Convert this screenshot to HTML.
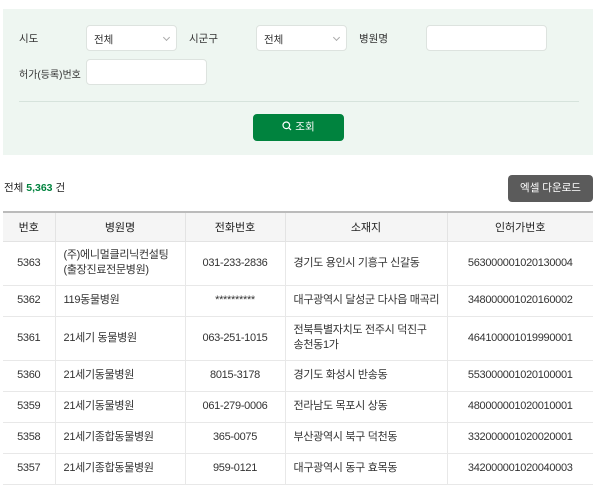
<!DOCTYPE html><html><head><style>
*{margin:0;padding:0;box-sizing:border-box}
body{width:600px;height:482px;overflow:hidden;background:#fff;font-family:"Liberation Sans","Noto Sans CJK KR",sans-serif;font-size:10px;color:#222;position:relative}
.box{position:absolute;left:3px;top:9px;width:590px;height:146px;background:#eef6f1}
.a{position:absolute}
.lbl{font-size:10.5px;color:#333}
.in{position:absolute;background:#fff;border:1px solid #dde3df;border-radius:4px;height:26px;font-size:10.5px;padding:6px 7px;color:#333}
.chev{position:absolute;right:7px;top:9px;width:5px;height:5px;border-right:1px solid #aaa;border-bottom:1px solid #aaa;transform:rotate(45deg)}
table{position:absolute;left:3px;top:211px;width:590px;border-collapse:collapse;table-layout:fixed;border-top:2px solid #bbb}
th{background:#f5f5f5;font-weight:normal;height:29px;font-size:11px;border-right:1px solid #e3e3e3;border-bottom:1px solid #e3e3e3}
td{border-right:1px solid #e8e8e8;border-bottom:1px solid #e8e8e8;font-size:11px;line-height:15px;padding:0 8px;height:31px;color:#333;white-space:nowrap;letter-spacing:-0.3px}
th:last-child,td:last-child{border-right:none}
td.c{text-align:center;padding:0 2px}
</style></head><body>
<div class="box"></div>
<div class="a lbl" style="left:19px;top:31px">시도</div>
<div class="in" style="left:86px;top:25px;width:91px">전체<span class="chev"></span></div>
<div class="a lbl" style="left:189px;top:31px">시군구</div>
<div class="in" style="left:256px;top:25px;width:91px">전체<span class="chev"></span></div>
<div class="a lbl" style="left:359px;top:31px">병원명</div>
<div class="in" style="left:426px;top:25px;width:121px"></div>
<div class="a lbl" style="left:19px;top:66px;font-size:10px">허가(등록)번호</div>
<div class="in" style="left:86px;top:59px;width:121px"></div>
<div class="a" style="left:19px;top:101px;width:560px;height:1px;background:#d6e3dc"></div>
<div class="a" style="left:253px;top:114px;width:91px;height:27px;background:#00833e;border-radius:4px;color:#fff;font-size:10.5px;text-align:center;line-height:27px">
<svg width="10" height="10" viewBox="0 0 10 10" style="vertical-align:-1px"><circle cx="4.3" cy="4.3" r="3.3" fill="none" stroke="#fff" stroke-width="1.2"/><path d="M6.8 6.8L9 9" stroke="#fff" stroke-width="1.2"/></svg> 조회</div>
<div class="a" style="left:4px;top:180px;font-size:10.5px">전체 <b style="color:#00833e;font-weight:bold">5,363</b> 건</div>
<div class="a" style="left:508px;top:175px;width:85px;height:27px;background:#5b5b5b;border-radius:4px;color:#fff;font-size:10.5px;text-align:center;line-height:27px">엑셀 다운로드</div>
<table>
<colgroup><col style="width:52px"><col style="width:130px"><col style="width:100px"><col style="width:162px"><col style="width:146px"></colgroup>
<tr><th>번호</th><th>병원명</th><th>전화번호</th><th>소재지</th><th>인허가번호</th></tr>
<tr><td class="c" style="height:44px">5363</td><td>(주)에니멀클리닉컨설팅<br>(출장진료전문병원)</td><td class="c">031-233-2836</td><td>경기도 용인시 기흥구 신갈동</td><td class="c">563000001020130004</td></tr>
<tr><td class="c">5362</td><td>119동물병원</td><td class="c">**********</td><td>대구광역시 달성군 다사읍 매곡리</td><td class="c">348000001020160002</td></tr>
<tr><td class="c" style="height:44px">5361</td><td>21세기 동물병원</td><td class="c">063-251-1015</td><td>전북특별자치도 전주시 덕진구<br>송천동1가</td><td class="c">464100001019990001</td></tr>
<tr><td class="c">5360</td><td>21세기동물병원</td><td class="c">8015-3178</td><td>경기도 화성시 반송동</td><td class="c">553000001020100001</td></tr>
<tr><td class="c">5359</td><td>21세기동물병원</td><td class="c">061-279-0006</td><td>전라남도 목포시 상동</td><td class="c">480000001020010001</td></tr>
<tr><td class="c">5358</td><td>21세기종합동물병원</td><td class="c">365-0075</td><td>부산광역시 북구 덕천동</td><td class="c">332000001020020001</td></tr>
<tr><td class="c">5357</td><td>21세기종합동물병원</td><td class="c">959-0121</td><td>대구광역시 동구 효목동</td><td class="c">342000001020040003</td></tr>
</table>
</body></html>
